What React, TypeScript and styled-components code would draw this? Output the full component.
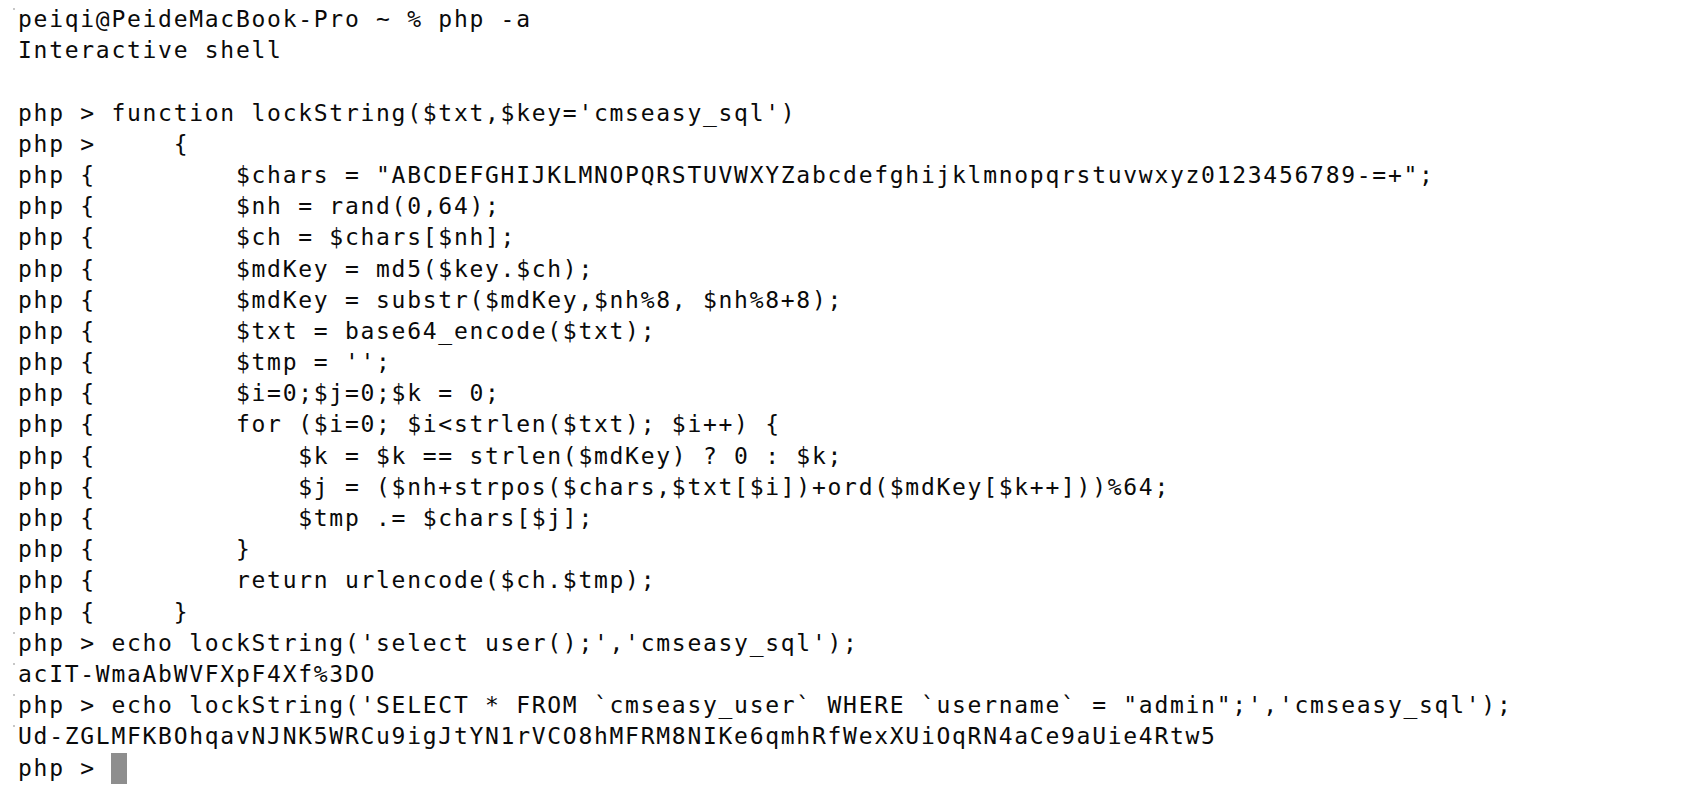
import React from "react";
import styled, { createGlobalStyle } from "styled-components";

const Global = createGlobalStyle`
  html, body {
    margin: 0;
    padding: 0;
    background: #ffffff;
  }
  body {
    width: 1701px;
    height: 792px;
    overflow: hidden;
  }
`;

const Terminal = styled.div`
  box-sizing: border-box;
  width: 1701px;
  height: 792px;
  padding: 4px 0 0 18px;
  background: #ffffff;
  color: #0a0a0a;
  font-family: "DejaVu Sans Mono", "Liberation Mono", monospace;
  font-size: 23px;
  letter-spacing: 1.72px;
  display: flex;
  flex-direction: column;
`;

const Line = styled.div<{ $marked?: boolean }>`
  position: relative;
  height: 31.2px;
  line-height: 31.2px;
  white-space: pre;
  &::before {
    content: "";
    display: ${(p) => (p.$marked ? "block" : "none")};
    position: absolute;
    left: -5px;
    top: 4px;
    width: 2px;
    height: 2px;
    border-radius: 1px;
    background: #b5b5b5;
  }
`;

const Cursor = styled.span`
  display: inline-block;
  width: 15.5px;
  height: 31px;
  vertical-align: top;
  background: #8e8e8e;
`;

const lines: { text: string; marked?: boolean }[] = [
  { text: "peiqi@PeideMacBook-Pro ~ % php -a", marked: true },
  { text: "Interactive shell" },
  { text: "" },
  { text: "php > function lockString($txt,$key='cmseasy_sql')" },
  { text: "php >     {" },
  { text: 'php {         $chars = "ABCDEFGHIJKLMNOPQRSTUVWXYZabcdefghijklmnopqrstuvwxyz0123456789-=+";' },
  { text: "php {         $nh = rand(0,64);" },
  { text: "php {         $ch = $chars[$nh];" },
  { text: "php {         $mdKey = md5($key.$ch);" },
  { text: "php {         $mdKey = substr($mdKey,$nh%8, $nh%8+8);" },
  { text: "php {         $txt = base64_encode($txt);" },
  { text: "php {         $tmp = '';" },
  { text: "php {         $i=0;$j=0;$k = 0;" },
  { text: "php {         for ($i=0; $i<strlen($txt); $i++) {" },
  { text: "php {             $k = $k == strlen($mdKey) ? 0 : $k;" },
  { text: "php {             $j = ($nh+strpos($chars,$txt[$i])+ord($mdKey[$k++]))%64;" },
  { text: "php {             $tmp .= $chars[$j];" },
  { text: "php {         }" },
  { text: "php {         return urlencode($ch.$tmp);" },
  { text: "php {     }" },
  { text: "php > echo lockString('select user();','cmseasy_sql');", marked: true },
  { text: "acIT-WmaAbWVFXpF4Xf%3DO", marked: true },
  {
    text: "php > echo lockString('SELECT * FROM `cmseasy_user` WHERE `username` = \"admin\";','cmseasy_sql');",
    marked: true,
  },
  { text: "Ud-ZGLMFKBOhqavNJNK5WRCu9igJtYN1rVCO8hMFRM8NIKe6qmhRfWexXUiOqRN4aCe9aUie4Rtw5", marked: true },
];

export default function App() {
  return (
    <>
      <Global />
      <Terminal>
        {lines.map((l, i) => (
          <Line key={i} $marked={l.marked}>
            {l.text}
          </Line>
        ))}
        <Line>
          {"php > "}
          <Cursor />
        </Line>
      </Terminal>
    </>
  );
}
